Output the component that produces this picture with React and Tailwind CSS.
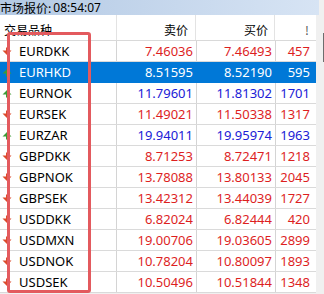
import React from "react";

const rows = [
  ["EURDKK", "7.46036", "7.46493", "457", "r", "d"],
  ["EURHKD", "8.51595", "8.52190", "595", "s", "u"],
  ["EURNOK", "11.79601", "11.81302", "1701", "b", "u"],
  ["EURSEK", "11.49021", "11.50338", "1317", "r", "d"],
  ["EURZAR", "19.94011", "19.95974", "1963", "b", "u"],
  ["GBPDKK", "8.71253", "8.72471", "1218", "r", "d"],
  ["GBPNOK", "13.78088", "13.80133", "2045", "r", "d"],
  ["GBPSEK", "13.42312", "13.44039", "1727", "r", "d"],
  ["USDDKK", "6.82024", "6.82444", "420", "r", "d"],
  ["USDMXN", "19.00706", "19.03605", "2899", "r", "d"],
  ["USDNOK", "10.78204", "10.80097", "1893", "r", "d"],
  ["USDSEK", "10.50496", "10.51844", "1348", "r", "d"],
];

function Arrow({ dir }) {
  if (dir === "u") {
    return (
      <svg width="10" height="9" viewBox="0 0 10 9" className="shrink-0">
        <path d="M5 1 L9.5 5.5 L6 5.5 L6 8.5 L4 8.5 L4 5.5 L0.5 5.5 Z" fill="#3f9a35" />
      </svg>
    );
  }
  return (
    <svg width="10" height="9" viewBox="0 0 10 9" className="shrink-0">
      <path d="M4 0.5 L6 0.5 L6 3.5 L9.5 3.5 L5 8 L0.5 3.5 L4 3.5 Z" fill="#dc4a2c" />
    </svg>
  );
}

export default function App() {
  return (
    <div
      className="relative w-[324px] h-[294px] overflow-hidden bg-[#f0f0f0]"
      style={{ fontFamily: '"Noto Sans", "Noto Sans CJK SC", sans-serif' }}
    >
      <div className="h-[15px] w-[319px] bg-gradient-to-r from-[#b3c9e4] to-[#d7e4f4] flex items-center text-[12px] leading-none text-black">
        <span style={{ fontFamily: '"Noto Sans CJK SC", sans-serif' }}>市场报价:</span>
        <span className="ml-[2px] text-[12px]">08:54:07</span>
      </div>
      <div className="flex">
        <div className="w-[316px] bg-white">
          <div className="flex h-[26px] border-b border-[#d9d9d9] text-[12px] text-black" style={{ fontFamily: '"Noto Sans CJK SC", sans-serif' }}>
            <div className="w-[117px] border-r border-[#e3e3e3] pl-[4px] pt-[6px]">交易品种</div>
            <div className="w-[79px] border-r border-[#e3e3e3] text-right pr-[7px] pt-[6px]">卖价</div>
            <div className="w-[79px] border-r border-[#e3e3e3] text-right pr-[6px] pt-[6px]">买价</div>
            <div className="w-[41px] text-right pr-[7px] pt-[6px] text-[#555]">!</div>
          </div>
          {rows.map(([sym, bid, ask, spr, c, dir]) => {
            const sel = c === "s";
            const col = sel ? "text-white" : c === "b" ? "text-[#2020d6]" : "text-[#dd1f1f]";
            const bl = sel ? "border-[#0078d7]" : "border-[#d4d4d4]";
            return (
              <div
                key={sym}
                className={`flex h-[21px] border-b text-[13px] leading-none ${sel ? "bg-[#0078d7] border-[#0078d7]" : "border-[#dadada]"}`}
              >
                <div className={`w-[116px] flex items-center pl-[2px] gap-[7px] ${sel ? "text-white" : "text-black"}`}>
                  <Arrow dir={dir} />
                  <span>{sym}</span>
                </div>
                <div className={`w-[80px] flex items-center justify-end pr-[3px] border-l ${bl} ${col}`}>{bid}</div>
                <div className={`w-[79px] flex items-center justify-end pr-[3px] border-l ${bl} ${col}`}>{ask}</div>
                <div className={`w-[41px] flex items-center justify-end pr-[6px] border-l ${bl} ${col}`}>{spr}</div>
              </div>
            );
          })}
        </div>
        <div className="flex-1 relative">
          <div className="absolute right-0 top-[18px] w-[1px] h-[29px] bg-[#6d6d6d]" />
        </div>
      </div>
      <div className="absolute left-[7px] top-[32px] w-[84px] h-[261px] border-[3px] border-[#e35a5e] rounded-[3px]" />
    </div>
  );
}
